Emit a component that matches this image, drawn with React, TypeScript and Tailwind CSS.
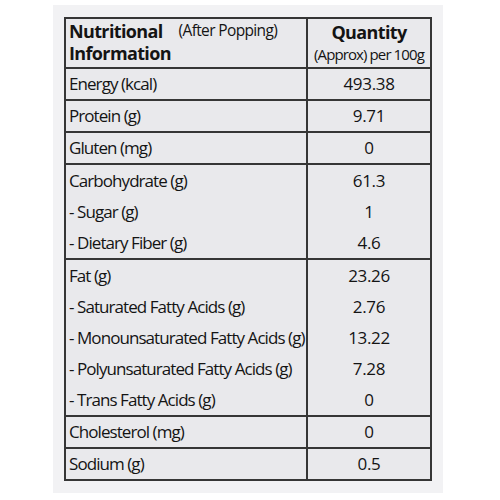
const groups: { label: string; value: string }[][] = [
  [{ label: 'Energy (kcal)', value: '493.38' }],
  [{ label: 'Protein (g)', value: '9.71' }],
  [{ label: 'Gluten (mg)', value: '0' }],
  [
    { label: 'Carbohydrate (g)', value: '61.3' },
    { label: '- Sugar (g)', value: '1' },
    { label: '- Dietary Fiber (g)', value: '4.6' },
  ],
  [
    { label: 'Fat (g)', value: '23.26' },
    { label: '- Saturated Fatty Acids (g)', value: '2.76' },
    { label: '- Monounsaturated Fatty Acids (g)', value: '13.22' },
    { label: '- Polyunsaturated Fatty Acids (g)', value: '7.28' },
    { label: '- Trans Fatty Acids (g)', value: '0' },
  ],
  [{ label: 'Cholesterol (mg)', value: '0' }],
  [{ label: 'Sodium (g)', value: '0.5' }],
]

export default function App() {
  return (
    <div className="w-[500px] h-[500px] bg-white pt-[5px] pl-[53px] font-['Open_Sans',sans-serif] text-[#141414]">
      <div className="w-[390px] h-[488px] bg-[#f2f2f4] pt-[12px] pl-[11px]">
        <div className="w-[368px] border-2 border-[#363636] bg-[#e9e9ec]">
          <div className="grid grid-cols-[242px_1fr] h-[48px]">
            <div className="border-r-2 border-[#363636] pl-[3px] pt-[2px] leading-[21px] tracking-[-0.04em]">
              <div className="flex items-baseline">
                <span className="text-[18px] font-bold">Nutritional</span>
                <span className="ml-[16px] text-[15.5px] font-medium relative -top-[2px]">(After Popping)</span>
              </div>
              <div className="text-[18px] font-bold">Information</div>
            </div>
            <div className="flex flex-col items-center pt-[2px] tracking-[-0.04em]">
              <span className="text-[18px] font-bold leading-[23px]">Quantity</span>
              <span className="text-[15px] font-medium leading-[20px] whitespace-nowrap tracking-[-0.06em]">(Approx) per 100g</span>
            </div>
          </div>
          {groups.map((rows, gi) => (
            <div key={gi} className="grid grid-cols-[242px_1fr] border-t-2 border-[#363636]">
              <div className="border-r-2 border-[#363636]">
                {rows.map(r => (
                  <div
                    key={r.label}
                    className={`${rows.length > 1 ? 'h-[31px]' : 'h-[30px]'} flex items-center pl-[3px] text-[17px] font-medium tracking-[-0.055em] whitespace-nowrap`}
                  >
                    {r.label}
                  </div>
                ))}
              </div>
              <div>
                {rows.map(r => (
                  <div
                    key={r.label}
                    className={`${rows.length > 1 ? 'h-[31px]' : 'h-[30px]'} flex items-center justify-center text-[17px] font-medium tracking-[-0.02em]`}
                  >
                    {r.value}
                  </div>
                ))}
              </div>
            </div>
          ))}
        </div>
      </div>
    </div>
  )
}
